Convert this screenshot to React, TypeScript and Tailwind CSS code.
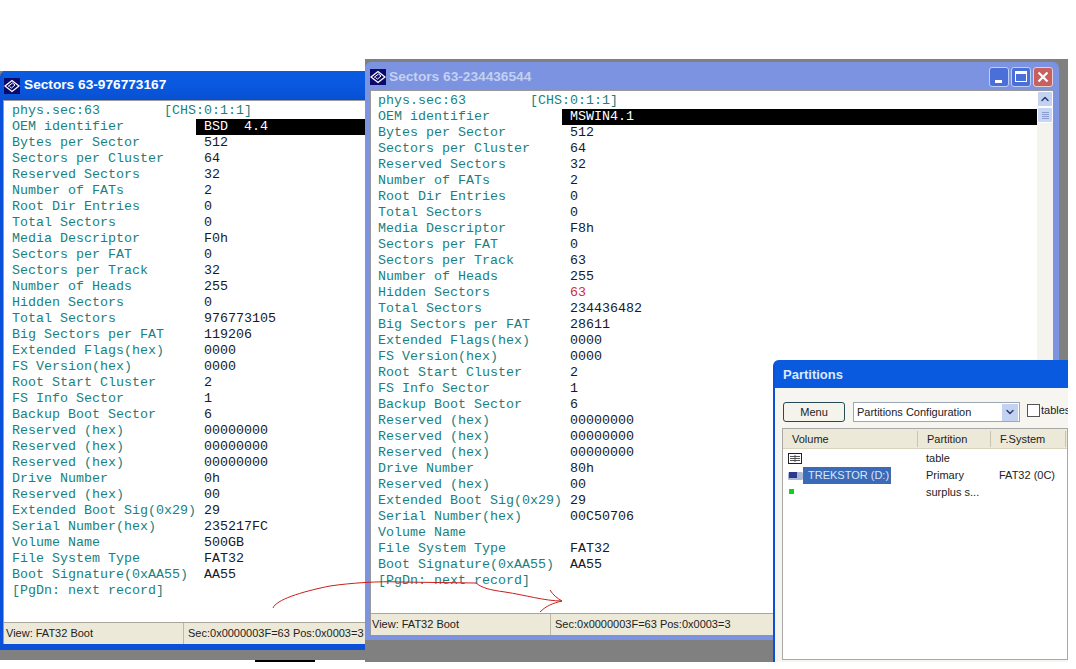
import React from "react";
import { ChevronDown, ChevronUp } from "lucide-react";

type Row = [string, string, boolean?];

const leftRows: Row[] = [
  ["OEM identifier", "BSD  4.4"],
  ["Bytes per Sector", "512"],
  ["Sectors per Cluster", "64"],
  ["Reserved Sectors", "32"],
  ["Number of FATs", "2"],
  ["Root Dir Entries", "0"],
  ["Total Sectors", "0"],
  ["Media Descriptor", "F0h"],
  ["Sectors per FAT", "0"],
  ["Sectors per Track", "32"],
  ["Number of Heads", "255"],
  ["Hidden Sectors", "0"],
  ["Total Sectors", "976773105"],
  ["Big Sectors per FAT", "119206"],
  ["Extended Flags(hex)", "0000"],
  ["FS Version(hex)", "0000"],
  ["Root Start Cluster", "2"],
  ["FS Info Sector", "1"],
  ["Backup Boot Sector", "6"],
  ["Reserved (hex)", "00000000"],
  ["Reserved (hex)", "00000000"],
  ["Reserved (hex)", "00000000"],
  ["Drive Number", "0h"],
  ["Reserved (hex)", "00"],
  ["Extended Boot Sig(0x29)", "29"],
  ["Serial Number(hex)", "235217FC"],
  ["Volume Name", "500GB"],
  ["File System Type", "FAT32"],
  ["Boot Signature(0xAA55)", "AA55"],
];

const rightRows: Row[] = [
  ["OEM identifier", "MSWIN4.1"],
  ["Bytes per Sector", "512"],
  ["Sectors per Cluster", "64"],
  ["Reserved Sectors", "32"],
  ["Number of FATs", "2"],
  ["Root Dir Entries", "0"],
  ["Total Sectors", "0"],
  ["Media Descriptor", "F8h"],
  ["Sectors per FAT", "0"],
  ["Sectors per Track", "63"],
  ["Number of Heads", "255"],
  ["Hidden Sectors", "63", true],
  ["Total Sectors", "234436482"],
  ["Big Sectors per FAT", "28611"],
  ["Extended Flags(hex)", "0000"],
  ["FS Version(hex)", "0000"],
  ["Root Start Cluster", "2"],
  ["FS Info Sector", "1"],
  ["Backup Boot Sector", "6"],
  ["Reserved (hex)", "00000000"],
  ["Reserved (hex)", "00000000"],
  ["Reserved (hex)", "00000000"],
  ["Drive Number", "80h"],
  ["Reserved (hex)", "00"],
  ["Extended Boot Sig(0x29)", "29"],
  ["Serial Number(hex)", "00C50706"],
  ["Volume Name", ""],
  ["File System Type", "FAT32"],
  ["Boot Signature(0xAA55)", "AA55"],
];

function AppIcon() {
  return (
    <svg width="16" height="16" viewBox="0 0 16 16" className="shrink-0">
      <rect width="16" height="16" fill="#0a0a6a" />
      <path d="M1 8 L8 2.5 L15 8 L8 13.5 Z" fill="none" stroke="#fff" strokeWidth="1.3" />
      <path d="M4 8.5 L8.5 5 L11 7 L7.5 10 L5.5 8.5" fill="none" stroke="#fff" strokeWidth="1" />
    </svg>
  );
}

function RecordList({ rows }: { rows: Row[] }) {
  return (
    <div className="font-['Liberation_Mono',monospace] text-[13.33px] leading-4 text-[#1c7f7c]">
      <div className="whitespace-pre">phys.sec:63        [CHS:0:1:1]</div>
      {rows.map(([label, value, red], i) => (
        <div key={i} className="grid grid-cols-[184px_1fr] h-4">
          <span className="whitespace-pre">{label}</span>
          <span
            className={
              i === 0
                ? "whitespace-pre pl-2 bg-black text-white"
                : red
                  ? "whitespace-pre pl-2 text-[#d0302a]"
                  : "whitespace-pre pl-2 text-[#1a1a1a]"
            }
          >
            {value}
          </span>
        </div>
      ))}
      <div>[PgDn: next record]</div>
    </div>
  );
}

function StatusBar({ split, inset }: { split: string; inset: string }) {
  return (
    <div className="flex h-[22px] shrink-0 items-center border-t border-[#a9a698] bg-[#ece9d8] font-['Liberation_Sans',sans-serif] text-[11px] text-[#222]">
      <div className={split + " " + inset + " h-full shrink-0 border-r border-[#bdb9a6] leading-[21px]"}>View: FAT32 Boot</div>
      <div className="whitespace-nowrap pl-[4px]">Sec:0x0000003F=63 Pos:0x0003=3</div>
    </div>
  );
}

export default function App() {
  return (
    <div className="relative h-[669px] w-[1076px] overflow-hidden bg-white">
      {/* left window */}
      <div className="absolute left-0 top-[71px] h-[589px] w-[365px] overflow-hidden bg-[#808080]">
        <div className="flex h-[579px] w-[520px] flex-col rounded-t-[6px] bg-[#0a50d8] px-[3px] pb-[6px]">
          <div className="flex h-[29px] shrink-0 items-center gap-[4px] bg-gradient-to-b from-[#0a5be0] via-[#0a58e0] to-[#0850d0] pl-[1px] font-['Liberation_Sans',sans-serif] text-[13.7px] font-bold text-white">
            <AppIcon />
            <span>Sectors 63-976773167</span>
          </div>
          <div className="flex min-h-0 flex-1 flex-col border-t border-l border-[#9a9a9a] bg-white">
            <div className="min-h-0 flex-1 pl-[8px] pt-[2px]">
              <RecordList rows={leftRows} />
            </div>
            <StatusBar split="w-[180px]" inset="pl-[2px]" />
          </div>
        </div>
      </div>
      <div className="absolute left-[255px] top-[660px] h-[2px] w-[60px] bg-black" />

      {/* right window, with the grey shadow behind it */}
      <div className="absolute left-[365px] top-[59px] h-[603px] w-[703px] bg-[#808080] pt-[3px]">
        <div className="flex h-[578px] w-[694px] flex-col rounded-t-[6px] bg-[#7b93e0] pl-[5px] pr-[6px] pb-[5px]">
          <div className="flex h-[28px] shrink-0 items-center gap-[3px] pt-[1px] font-['Liberation_Sans',sans-serif] text-[13.7px] font-bold text-[#c4d0f0]">
            <AppIcon />
            <span className="pt-[1px]">Sectors 63-234436544</span>
            <div className="ml-auto flex items-center gap-[2px]">
              <div className="flex h-[20px] w-[20px] items-end rounded-[3px] border border-[#c0d0f0] bg-[#4a6fd8] pb-[3px] pl-[5px]">
                <div className="h-[3px] w-[7px] bg-white" />
              </div>
              <div className="flex h-[20px] w-[20px] items-center justify-center rounded-[3px] border border-[#c0d0f0] bg-[#4a6fd8]">
                <div className="h-[11px] w-[12px] border border-t-[3px] border-white" />
              </div>
              <div className="flex h-[20px] w-[20px] items-center justify-center rounded-[3px] border border-[#e0d0d8] bg-[#c86060]">
                <svg width="12" height="12" viewBox="0 0 12 12">
                  <path d="M1.5 1.5 L10.5 10.5 M10.5 1.5 L1.5 10.5" stroke="#fff" strokeWidth="2.2" />
                </svg>
              </div>
            </div>
          </div>
          <div className="flex min-h-0 flex-1 flex-col border-t border-l border-[#9a9a9a] bg-white">
            <div className="flex min-h-0 flex-1">
              <div className="min-h-0 flex-1 overflow-hidden pl-[7px] pt-[2px]">
                <RecordList rows={rightRows} />
              </div>
              <div className="flex w-[16px] shrink-0 flex-col bg-[#f4f3ee]">
                <div className="flex h-[16px] items-center justify-center rounded-[2px] border border-white bg-[#c4d2f2]">
                  <ChevronUp size={12} strokeWidth={3} className="text-[#2a3f78]" />
                </div>
                <div className="flex h-[16px] flex-col items-center justify-center gap-[1px] rounded-[2px] border border-white bg-[#c8d6f6]">
                  <div className="h-px w-[7px] bg-[#8a9cd0]" />
                  <div className="h-px w-[7px] bg-[#8a9cd0]" />
                  <div className="h-px w-[7px] bg-[#8a9cd0]" />
                  <div className="h-px w-[7px] bg-[#8a9cd0]" />
                </div>
              </div>
            </div>
            <StatusBar split="w-[180px]" inset="pl-[1px]" />
          </div>
        </div>
      </div>

      {/* hand drawn arrow */}
      <svg className="absolute left-0 top-0" width="1076" height="669" fill="none" stroke="#c8201c" strokeWidth="1">
        <path d="M273 608 C276 600 300 592 330 586 C350 583 380 581 400 582 L476 583 C482 588 490 590 505 592 C525 595 545 601 562 601" />
        <path d="M550 590 C553 595 557 598 562 601 C553 603 546 606 540 612" />
      </svg>

      {/* partitions dialog */}
      <div className="absolute left-[773px] top-[360px] flex h-[302px] w-[295px] flex-col overflow-hidden rounded-tl-[6px] border-l-[2px] border-[#0a50d8] bg-[#0a5ae0] font-['Liberation_Sans',sans-serif]">
        <div className="flex h-[28px] shrink-0 items-center pl-[8px] pt-[2px] text-[13px] font-bold text-[#dfe8f8]">Partitions</div>
        <div className="min-h-0 flex-1 bg-[#f6f5f0] pl-[7px]">
          <div className="flex items-start gap-[8px] pl-px pt-[14px] text-[11px] text-[#222]">
            <div className="flex h-[20px] w-[62px] shrink-0 items-center justify-center rounded-[3px] border border-[#274a5a] bg-[#f4f3ec]">Menu</div>
            <div className="flex h-[20px] w-[167px] shrink-0 items-center justify-between border border-[#9aa8b8] bg-white pl-[3px] pr-px">
              <span className="whitespace-nowrap">Partitions Configuration</span>
              <div className="flex h-[17px] w-[16px] items-center justify-center bg-[#c4d2f2]">
                <ChevronDown size={12} strokeWidth={3} className="text-[#2a3f78]" />
              </div>
            </div>
            <div className="-ml-px flex items-center gap-px">
              <div className="h-[13px] w-[13px] shrink-0 border border-[#555] bg-white" />
              <span>tables</span>
            </div>
          </div>
          <div className="mt-[6px] h-[232px] border border-[#a8a8a8] bg-white text-[11px] text-[#222]">
            <div className="grid h-[20px] grid-cols-[126px_73px_75px] items-center border-b border-[#d8d4c0] bg-[#ece9d8] pl-[9px]">
              <span className="h-[16px] border-r border-[#c8c4b0] leading-[16px]">Volume</span>
              <span className="h-[16px] border-r border-[#c8c4b0] pl-[9px] leading-[16px]">Partition</span>
              <span className="h-[16px] border-r border-[#c8c4b0] pl-[9px] leading-[16px]">F.System</span>
            </div>
            <div className="grid grid-cols-[143px_73px_1fr] pt-[1px] leading-[17px]">
              <div className="flex h-[17px] items-center pl-[5px]">
                <svg width="14" height="11" viewBox="0 0 14 11">
                  <rect x="0.5" y="0.5" width="13" height="10" fill="#fff" stroke="#222" />
                  <path d="M2 3.5 H12 M2 5.5 H12 M2 7.5 H12 M7 2 V9" stroke="#555" />
                </svg>
              </div>
              <span>table</span>
              <span />
              <div className="flex h-[17px] items-center pl-[5px]">
                <svg width="15" height="10" viewBox="0 0 15 10" className="shrink-0">
                  <rect y="1" width="15" height="8" rx="1.5" fill="#aab8d4" />
                  <rect x="1" y="1" width="8" height="6" fill="#2a3a90" />
                </svg>
                <span className="w-[88px] bg-[#3a6ab8] pl-[5px] text-[#dce6f6]">TREKSTOR (D:)</span>
              </div>
              <span>Primary</span>
              <span>FAT32 (0C)</span>
              <div className="flex h-[17px] items-center pl-[6px]">
                <div className="mb-[3px] h-[5px] w-[5px] bg-[#10d020]" />
              </div>
              <span>surplus s...</span>
              <span />
            </div>
          </div>
        </div>
      </div>
    </div>
  );
}
